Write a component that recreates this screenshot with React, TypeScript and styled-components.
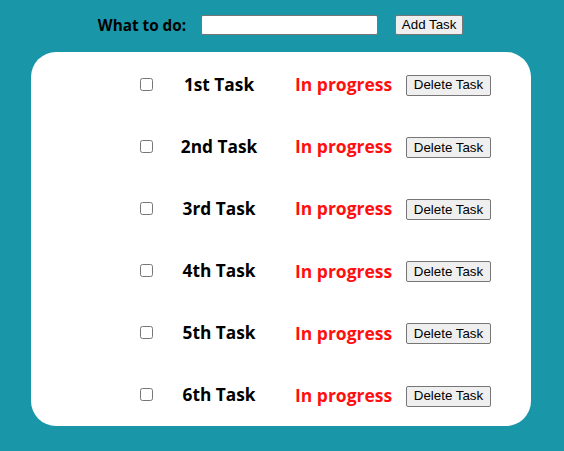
import React from "react";
import styled, { createGlobalStyle } from "styled-components";

const Global = createGlobalStyle`
  html, body {
    margin: 0;
    padding: 0;
    background: #1997a9;
  }
  body {
    font-family: "Open Sans", "Noto Sans", sans-serif;
  }
`;

const Page = styled.div`
  width: 564px;
  height: 451px;
  padding-top: 15px;
  box-sizing: border-box;
`;

const Header = styled.form`
  display: flex;
  align-items: center;
  justify-content: center;
  height: 20px;
  margin-left: -3px;
`;

const Label = styled.label`
  font-family: "Open Sans", sans-serif;
  font-weight: 700;
  font-size: 15.3px;
  color: #000;
  margin-right: 15px;
`;

const TextInput = styled.input`
  width: 177px;
  height: 20px;
  box-sizing: border-box;
  border: 1px solid #767676;
  border-radius: 2px;
  background: #fff;
  padding: 1px 2px;
  margin: 0 17px 0 0;
  font-family: "Liberation Sans", Arial, sans-serif;
  font-size: 13.33px;
`;

const Button = styled.button<{ $w: number; $h: number }>`
  width: ${(p) => p.$w}px;
  height: ${(p) => p.$h}px;
  box-sizing: border-box;
  padding: 0;
  margin: 0;
  background: #efefef;
  border: 1px solid #767676;
  border-radius: 2px;
  color: #000;
  font-family: "Liberation Sans", Arial, sans-serif;
  font-size: 13.33px;
  line-height: 1;
  white-space: nowrap;
  text-align: center;
`;

const Card = styled.div`
  width: 500px;
  height: 374px;
  box-sizing: border-box;
  padding-top: 1px;
  margin: 17px 0 0 31px;
  background: #fff;
  border-radius: 25px;
  display: grid;
  grid-template-rows: repeat(6, 1fr);
`;

const Row = styled.div`
  display: grid;
  grid-template-columns: 13px 142px 111px auto;
  align-items: center;
  padding-left: 109px;
`;

const Check = styled.input`
  width: 13px;
  height: 13px;
  margin: 0;
`;

const Name = styled.span`
  text-align: center;
  padding-right: 10px;
  font-weight: 700;
  font-size: 17.3px;
  color: #000;
`;

const Status = styled.span`
  font-weight: 700;
  font-size: 17.5px;
  color: #ff0f0f;
`;

const tasks = ["1st Task", "2nd Task", "3rd Task", "4th Task", "5th Task", "6th Task"];

export default function App() {
  return (
    <Page>
      <Global />
      <Header onSubmit={(e) => e.preventDefault()}>
        <Label htmlFor="todo">What to do:</Label>
        <TextInput id="todo" type="text" />
        <Button $w={68} $h={20} type="submit">Add Task</Button>
      </Header>
      <Card>
        {tasks.map((t) => (
          <Row key={t}>
            <Check type="checkbox" />
            <Name>{t}</Name>
            <Status>In progress</Status>
            <div>
              <Button $w={85} $h={21} type="button">Delete Task</Button>
            </div>
          </Row>
        ))}
      </Card>
    </Page>
  );
}
